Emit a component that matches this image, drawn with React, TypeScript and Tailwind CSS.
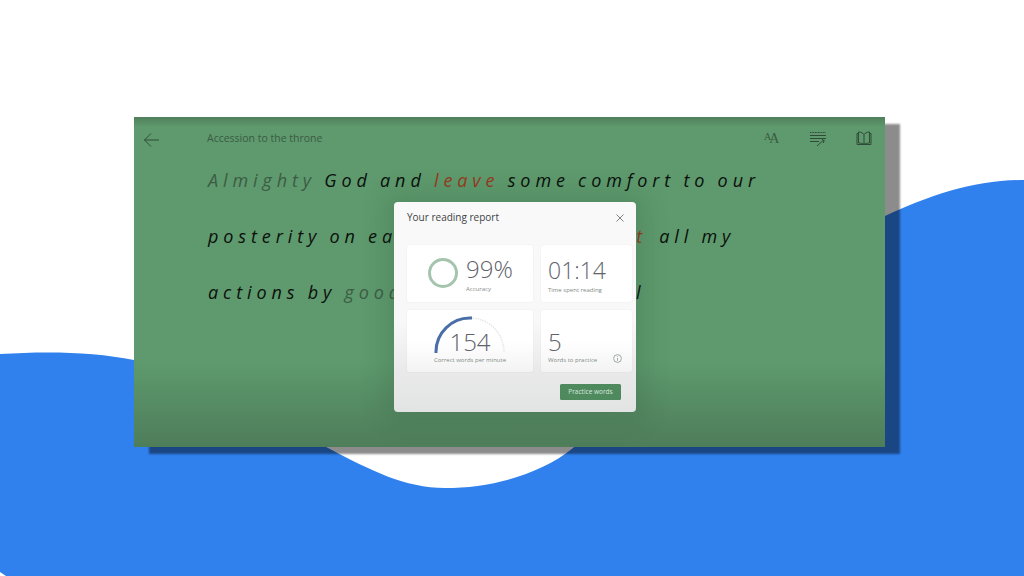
import React from "react";

function Card({ className, children }: { className: string; children: React.ReactNode }) {
  return <div className={"relative rounded-[3px] shadow-[0_0_2px_rgba(0,0,0,0.07)] " + className}>{children}</div>;
}

export default function App() {
  return (
    <div className="relative w-[1024px] h-[576px] overflow-hidden bg-white font-['Open_Sans',sans-serif]">
      <svg className="absolute inset-0" width="1024" height="576" viewBox="0 0 1024 576">
        <path
          d="M0 354 C 48 351, 95 352, 134 360 C 215 377, 270 420, 330 449 C 370 470, 405 488, 445 488 C 490 488, 540 475, 573 448 C 680 360, 780 265, 885 216 C 930 195, 975 180, 1024 180 L1024 576 L6 576 L0 572 Z"
          fill="#3081ee"
        />
      </svg>

      <div className="relative pt-[117px] pl-[134px]">
        <div className="relative w-[751px] h-[330px] bg-[linear-gradient(180deg,#4f7f5b_0px,#5e9a6d_10px,#5e9a6d_245px,#4e7d5a_330px)] shadow-[15px_7px_2px_rgba(0,0,0,0.45)]">
          <header className="flex items-center h-[44px] pl-[9px] pr-[13px] text-[#37553f]">
            <svg width="17" height="16" viewBox="0 0 17 16" fill="none" stroke="#2f4a36" strokeWidth="1" className="mt-[1px]">
              <path d="M16 8H1.5M8 1.5 1.5 8 8 14.5" />
            </svg>
            <span className="ml-[47px] text-[10.5px] text-[#3c5a44]">Accession to the throne</span>
            <div className="ml-auto flex items-center">
              <div className="flex items-end w-[16px] h-[16px] -mt-[2px] font-['Liberation_Serif',serif] leading-none text-[#3a5a42]">
                <span className="text-[10px] mb-[4px]">A</span>
                <span className="text-[14px] -ml-[2px]">A</span>
              </div>
              <svg className="ml-[29px]" width="18" height="16" viewBox="0 0 18 16" fill="none" stroke="#2f4a36" strokeWidth="1">
                <path d="M1 1.5H17" strokeDasharray="1 0.6" />
                <path d="M1 4.5H17M1 7.5H17M1 10.5H10" />
                <path d="M8 15 14 9.5M13.5 8l.6 1.4 1.4.4-1.1.8v1.4" />
              </svg>
              <svg className="ml-[29px] -mt-[2px]" width="16" height="15" viewBox="0 0 16 15" fill="none" stroke="#2f4a36" strokeWidth="1">
                <path d="M2.5 2.5H1V13.5H15V2.5H13.5" />
                <path d="M8 3.5C7 2 5 1 2.5 1V12C5 12 7 12.5 8 13.5 9 12.5 11 12 13.5 12V1C11 1 9 2 8 3.5ZM8 3.5V13.5" />
              </svg>
            </div>
          </header>

          <div className="pl-[74px] -mt-[9px] text-[18px] italic leading-[56px] tracking-[4.9px] [word-spacing:-1.3px] text-[#0b0f0c] whitespace-nowrap">
            <div>
              <span className="text-[#3d5c45]">Almighty</span> God and <span className="text-[#97391d]">leave</span> some comfort to our
            </div>
            <div>
              posterity on earth and may I direc<span className="text-[#97391d]">t</span>
              <span className="ml-[4px]"> all my</span>
            </div>
            <div>
              actions by <span className="text-[#3d5c45]">good</span>
              <span className="[word-spacing:-3.5px]"> and honest counsel</span>
            </div>
          </div>

          <div className="absolute left-[260px] top-[85px] w-[242px] h-[210px] rounded-[4px] bg-[linear-gradient(180deg,#f9f9f9_0px,#f8f8f8_120px,#e9e9e9_170px,#e2e4e3_210px)] shadow-[0_0_24px_10px_rgba(40,70,50,0.16)]">
            <div className="flex items-center justify-between pl-[13px] pr-[12px] pb-[12px] h-[43px]">
              <span className="text-[10px] font-medium text-[#3d4246]">Your reading report</span>
              <svg width="8" height="8" viewBox="0 0 8 8" stroke="#5d6266" strokeWidth="0.8">
                <path d="M0.5 0.5 7.5 7.5M7.5 0.5 0.5 7.5" />
              </svg>
            </div>
            <div className="grid grid-cols-[126px_91px] grid-rows-[57px_62px] gap-[8px] pl-[13px]">
              <Card className="bg-white">
                <div className="flex h-full pl-[20px] pt-[12px]">
                  <svg width="32" height="32" viewBox="0 0 32 32" className="shrink-0">
                    <circle cx="16" cy="16" r="13.5" fill="none" stroke="#a5c4ad" strokeWidth="3" />
                  </svg>
                  <div className="ml-[7px] -mt-[2px]">
                    <div className="text-[24px] leading-[28px] font-light text-[#5f636d]">99%</div>
                    <div className="text-[6px] leading-[9px] mt-[2px] text-[#7f8c86]">Accuracy</div>
                  </div>
                </div>
              </Card>
              <Card className="bg-white">
                <div className="pl-[7px] pt-[12px]">
                  <div className="text-[23px] leading-[27px] font-light text-[#5f636d]">01:14</div>
                  <div className="text-[6px] leading-[9px] mt-[2px] text-[#7f8c86]">Time spent reading</div>
                </div>
              </Card>
              <Card className="bg-[linear-gradient(180deg,#ffffff_50%,#f3f3f3_100%)]">
                <svg className="absolute left-[27px] top-[6px]" width="72" height="38" viewBox="0 0 72 38" fill="none">
                  <path d="M36 2A34 34 0 0 1 70 36" stroke="#e6e6e6" strokeWidth="1.5" strokeDasharray="1.5 1" />
                  <path d="M2 37A34 34 0 0 1 38 2" stroke="#4a6ea8" strokeWidth="3" />
                </svg>
                <div className="pt-[18px] text-center">
                  <div className="text-[24px] leading-[28px] font-light text-[#5e636b]">154</div>
                  <div className="text-[6px] leading-[9px] text-[#7f8c86]">Correct words per minute</div>
                </div>
              </Card>
              <Card className="bg-[linear-gradient(180deg,#ffffff_50%,#f3f3f3_100%)]">
                <div className="pl-[7px] pt-[18px]">
                  <div className="text-[24px] leading-[28px] font-light text-[#5e636b]">5</div>
                  <div className="text-[6px] leading-[9px] text-[#7f8c86]">Words to practice</div>
                </div>
                <svg className="absolute right-[10px] bottom-[9px]" width="9" height="9" viewBox="0 0 9 9" fill="none" stroke="#7d8a82" strokeWidth="0.7">
                  <circle cx="4.5" cy="4.5" r="3.9" />
                  <path d="M4.5 4V6.8M4.5 2.2V3" />
                </svg>
              </Card>
            </div>
            <div className="flex justify-end pr-[15px] mt-[12px]">
              <button className="w-[61px] h-[16px] rounded-[1.5px] bg-[#4f8a5f] text-[6.5px] leading-[16px] text-[#d8e8dc]">Practice words</button>
            </div>
          </div>
        </div>
      </div>
    </div>
  );
}
